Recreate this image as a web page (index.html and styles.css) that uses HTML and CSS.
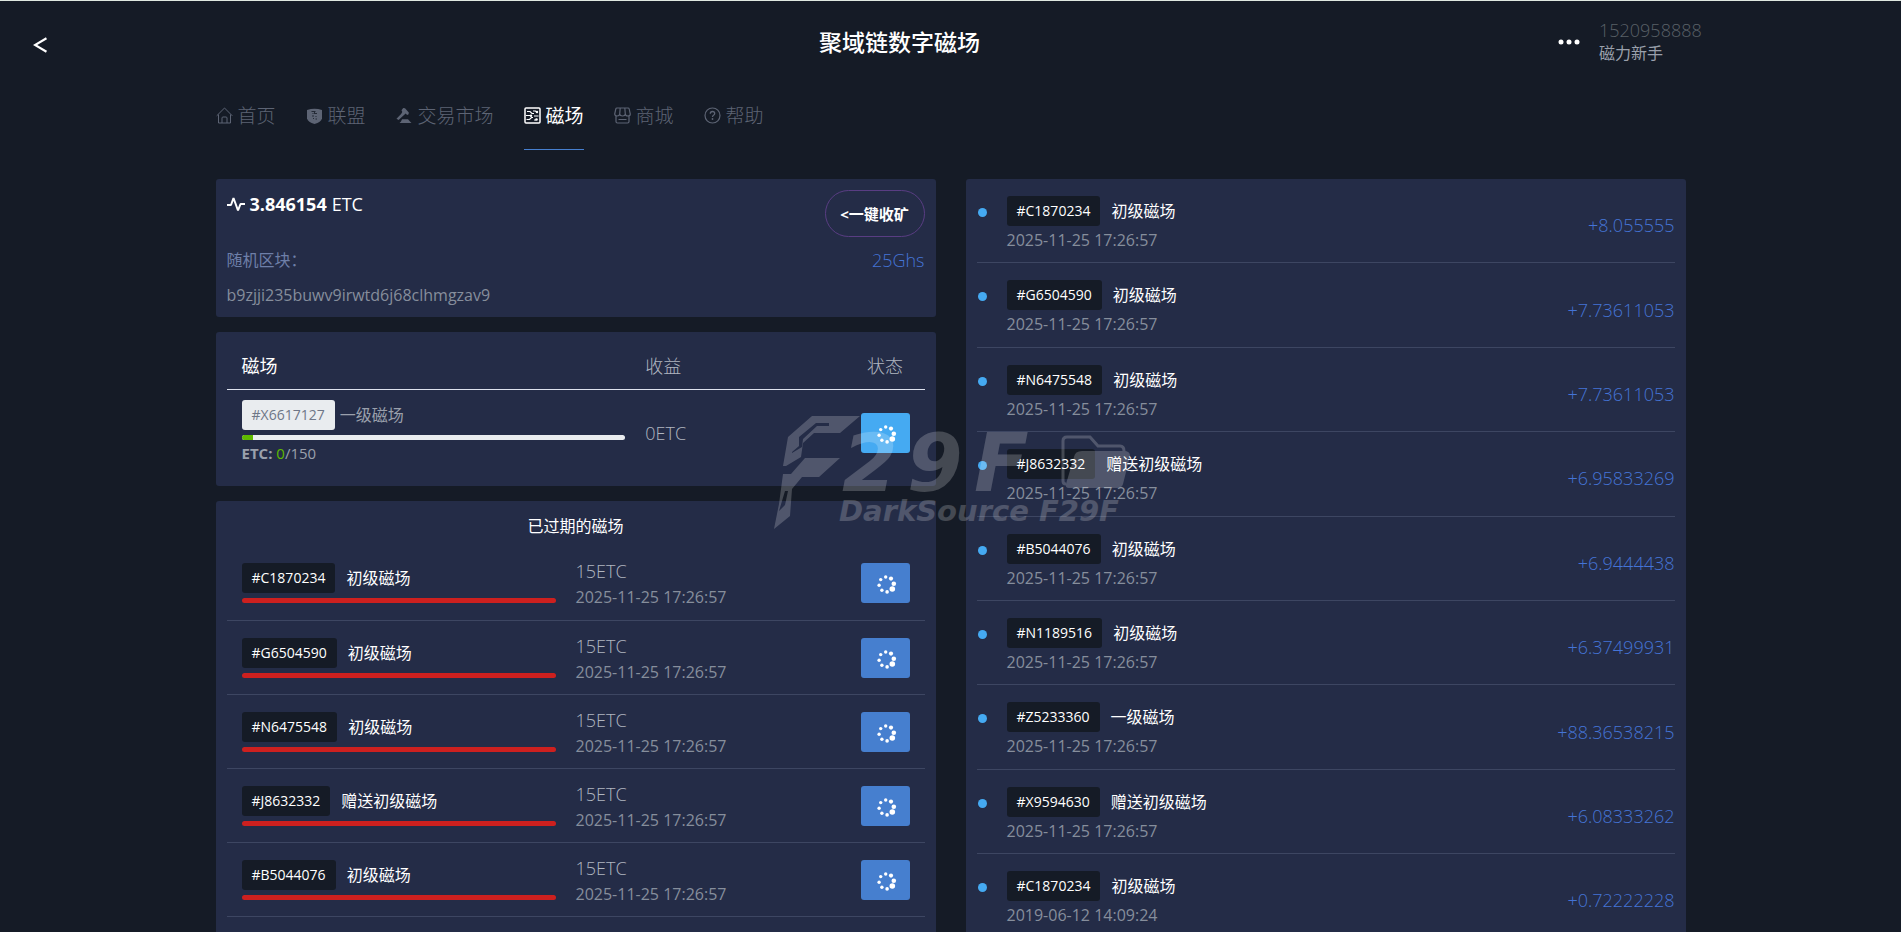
FILE: index.html
```html
<!DOCTYPE html>
<html lang="zh-CN">
<head>
<meta charset="utf-8">
<title>聚域链数字磁场</title>
<link rel="stylesheet" href="styles.css">
</head>
<body>
<svg class="defs" aria-hidden="true">
  <symbol id="spin" viewBox="0 0 49 40">
    <g fill="#fff">
      <circle cx="24.7" cy="14" r="1.7"/><circle cx="30" cy="15.6" r="2.1"/><circle cx="32.8" cy="20.7" r="2.3"/>
      <circle cx="31.3" cy="26" r="2.8"/><circle cx="26.1" cy="28.9" r="1.8"/><circle cx="20.9" cy="27.2" r="1.7"/>
      <circle cx="18.1" cy="22.2" r="1.7"/><circle cx="19.7" cy="16.6" r="1.7"/>
    </g>
  </symbol>
</svg>

<header class="top">
  <a class="back" href="#" aria-label="返回"><svg width="14" height="16" viewBox="0 0 14 16"><path d="M13.500 1.300 2 8l11.500 6.700" fill="none" stroke="#fff" stroke-width="2.200"/></svg></a>
  <h1 class="title">聚域链数字磁场</h1>
  <div class="user">
    <button class="more" type="button" aria-label="更多"><svg width="22" height="6" viewBox="0 0 22 6"><g fill="#fff"><circle cx="3" cy="3" r="2.500"/><circle cx="11" cy="3" r="2.500"/><circle cx="19" cy="3" r="2.500"/></g></svg></button>
    <div>
      <div class="phone">1520958888</div>
      <div class="rank">磁力新手</div>
    </div>
  </div>
</header>

<nav class="nav wrap">
  <a href="#"><svg viewBox="0 0 17 17"><path d="M.7 8.800 8.500 1l7.800 7.800M2.500 7.500v8.500h12V7.500M6 16v-5q0-1 1-1h3q1 0 1 1v5" fill="none" stroke="currentColor"/></svg>首页</a>
  <a href="#"><svg viewBox="0 0 17 17"><path fill="currentColor" d="M1 3Q8.500.6 16 3v8.500q-1 3.500-7.500 5.500Q2 15 1 11.500Z"/><path d="M5.500 4.500h4M6.500 6.500h1M9 6.500h2M6 9h2M10 9v1M7 11.500h1M9.500 12h1.500M8.500 4v3" stroke="#242a36" fill="none"/></svg>联盟</a>
  <a href="#"><svg viewBox="0 0 17 17"><g fill="currentColor"><path d="m7.200 1 1.800.2 3.800 4.300-.2 1.700-1.500.7-1.400-1.400-2.500 2.300L2.600 13 .5 11.800l4.600-4.700L6.300 5 5.500 3.200Z"/><path d="M6 12.300h6l2 2.200 1.500 1.500h-12l1.500-1.500Z"/></g></svg>交易市场</a>
  <a class="on" href="#" aria-current="page"><svg viewBox="0 0 17 17"><rect x="1" y="1" width="15" height="15" rx="1" fill="none" stroke="currentColor" stroke-width="1.500"/><path d="M3 4.500h3l2 2h2M9 4h2.500l1 1M2 8.500h4M10 9h4.500M2.500 12.500h3l2-2h1.500M10 13h2" fill="none" stroke="currentColor" stroke-width="1.200"/><g fill="currentColor"><circle cx="13" cy="5" r="1.200"/><circle cx="7" cy="8.700" r="1.200"/><circle cx="12.500" cy="12.500" r="1.300"/></g></svg>磁场</a>
  <a href="#"><svg viewBox="0 0 17 17"><path d="M3 1h11q1 0 1.200 1L16.300 7q0 2-2.400 2T11.300 7q-.3 2-2.800 2T5.700 7q-.3 2-2.600 2T.7 7L1.800 2Q2 1 3 1ZM6.200 1l-.5 6M10.800 1l.5 6M2 9v5.500Q2 16 3.500 16h10q1.500 0 1.500-1.500V9M4.500 12.500h8" fill="none" stroke="currentColor" stroke-width="1.200"/></svg>商城</a>
  <a href="#"><svg viewBox="0 0 17 17"><circle cx="8.500" cy="8.500" r="7.500" fill="none" stroke="currentColor" stroke-width="1.200"/><path d="M6.300 6.700q0-2.200 2.200-2.200t2.200 2q0 1.100-1.200 1.800-1 .6-1 1.700" fill="none" stroke="currentColor" stroke-width="1.300"/><circle cx="8.500" cy="12" r=".9" fill="currentColor"/></svg>帮助</a>
</nav>

<main class="cols wrap">
  <div class="left">
    <section class="card block">
      <div class="line head">
        <div class="power"><svg width="18" height="17" viewBox="0 0 18 17"><path d="M0 9h4L6.500 2 11 14.500 13.500 8H18" fill="none" stroke="#fff" stroke-width="2" stroke-linejoin="bevel"/></svg><b>3.846154</b> ETC</div>
        <button class="collect" type="button">&lt;一键收矿</button>
      </div>
      <div class="line rand"><span>随机区块：</span><span class="ghs">25Ghs</span></div>
      <div class="hash">b9zjji235buwv9irwtd6j68clhmgzav9</div>
    </section>

    <section class="card running">
      <table class="grid live">
        <thead><tr><th class="c1">磁场</th><th>收益</th><th class="c3">状态</th></tr></thead>
        <tbody><tr>
          <td class="c1"><div class="tagline near"><span class="tag pale">#X6617127</span><span>一级磁场</span></div><div class="bar"><i style="width:3%"></i></div><div class="etc"><b>ETC:</b> <em>0</em>/150</div></td>
          <td class="gain">0ETC</td>
          <td class="c3"><button class="state bright" type="button" aria-label="运行中"><svg><use href="#spin"/></svg></button></td>
        </tr></tbody>
      </table>
    </section>

    <section class="card expired">
      <h2 class="sub">已过期的磁场</h2>
      <table class="grid past">
        <tbody>
        <tr><td class="c1"><div class="tagline"><span class="tag">#C1870234</span><span>初级磁场</span></div><div class="bar red"></div></td><td><div class="gain">15ETC</div><div class="date">2025-11-25 17:26:57</div></td><td class="c3"><button class="state" type="button" aria-label="状态"><svg><use href="#spin"/></svg></button></td></tr>
        <tr><td class="c1"><div class="tagline"><span class="tag">#G6504590</span><span>初级磁场</span></div><div class="bar red"></div></td><td><div class="gain">15ETC</div><div class="date">2025-11-25 17:26:57</div></td><td class="c3"><button class="state" type="button" aria-label="状态"><svg><use href="#spin"/></svg></button></td></tr>
        <tr><td class="c1"><div class="tagline"><span class="tag">#N6475548</span><span>初级磁场</span></div><div class="bar red"></div></td><td><div class="gain">15ETC</div><div class="date">2025-11-25 17:26:57</div></td><td class="c3"><button class="state" type="button" aria-label="状态"><svg><use href="#spin"/></svg></button></td></tr>
        <tr><td class="c1"><div class="tagline"><span class="tag">#J8632332</span><span>赠送初级磁场</span></div><div class="bar red"></div></td><td><div class="gain">15ETC</div><div class="date">2025-11-25 17:26:57</div></td><td class="c3"><button class="state" type="button" aria-label="状态"><svg><use href="#spin"/></svg></button></td></tr>
        <tr><td class="c1"><div class="tagline"><span class="tag">#B5044076</span><span>初级磁场</span></div><div class="bar red"></div></td><td><div class="gain">15ETC</div><div class="date">2025-11-25 17:26:57</div></td><td class="c3"><button class="state" type="button" aria-label="状态"><svg><use href="#spin"/></svg></button></td></tr>
        </tbody>
      </table>
    </section>
  </div>

  <ul class="card feed">
    <li><i class="dot"></i><div class="info"><div class="tagline"><span class="tag">#C1870234</span><span>初级磁场</span></div><div class="date">2025-11-25 17:26:57</div></div><span class="amt">+8.055555</span></li>
    <li><i class="dot"></i><div class="info"><div class="tagline"><span class="tag">#G6504590</span><span>初级磁场</span></div><div class="date">2025-11-25 17:26:57</div></div><span class="amt">+7.73611053</span></li>
    <li><i class="dot"></i><div class="info"><div class="tagline"><span class="tag">#N6475548</span><span>初级磁场</span></div><div class="date">2025-11-25 17:26:57</div></div><span class="amt">+7.73611053</span></li>
    <li><i class="dot"></i><div class="info"><div class="tagline"><span class="tag">#J8632332</span><span>赠送初级磁场</span></div><div class="date">2025-11-25 17:26:57</div></div><span class="amt">+6.95833269</span></li>
    <li><i class="dot"></i><div class="info"><div class="tagline"><span class="tag">#B5044076</span><span>初级磁场</span></div><div class="date">2025-11-25 17:26:57</div></div><span class="amt">+6.9444438</span></li>
    <li><i class="dot"></i><div class="info"><div class="tagline"><span class="tag">#N1189516</span><span>初级磁场</span></div><div class="date">2025-11-25 17:26:57</div></div><span class="amt">+6.37499931</span></li>
    <li><i class="dot"></i><div class="info"><div class="tagline"><span class="tag">#Z5233360</span><span>一级磁场</span></div><div class="date">2025-11-25 17:26:57</div></div><span class="amt">+88.36538215</span></li>
    <li><i class="dot"></i><div class="info"><div class="tagline"><span class="tag">#X9594630</span><span>赠送初级磁场</span></div><div class="date">2025-11-25 17:26:57</div></div><span class="amt">+6.08333262</span></li>
    <li><i class="dot"></i><div class="info"><div class="tagline"><span class="tag">#C1870234</span><span>初级磁场</span></div><div class="date">2019-06-12 14:09:24</div></div><span class="amt">+0.72222228</span></li>
  </ul>
</main>

<svg class="mark" viewBox="0 0 362 120" aria-hidden="true">
  <g fill="#fff">
    <path fill-rule="evenodd" d="M38 4h48L66 21H40L29 31 27 45 12 54H9L14 25ZM42 11 25 25v9l-7 6v1l10-6 1-8 14-13h12v-3Z"/>
    <path fill-rule="evenodd" d="M31 46h35L45 65H28L18 77 16 104 0 117 5 92 9 62h8ZM11 79 5 99l6-6 3-14Z"/>
    <path d="M292 72q-3 0-3-3V29q0-4 4-4h23l8 9h22q4 0 4 5v3" fill="none" stroke="#fff" stroke-width="3"/>
    <path d="M308 39h42q6 0 6 5l-7 28q-1 4-6 4h-48q-4 0-3-4l8-27q1-6 8-6Z"/>
    <g class="brand">
      <text x="68 133 200" y="79" class="big">29F</text>
      <text x="65" y="109" class="small">DarkSource F29F</text>
    </g>
  </g>
</svg>
</body>
</html>
```
FILE: styles.css
```css
* { box-sizing: border-box; }
body {
  margin: 0;
  height: 100vh;
  overflow: hidden;
  display: flex;
  flex-direction: column;
  position: relative;
  background: #151b26;
  border-top: 1px solid #dfe8e0;
  color: #fff;
  font: 16px/24px "Open Sans", "Noto Sans", "Noto Sans CJK SC", sans-serif;
}
.defs { position: absolute; width: 0; height: 0; }
a { color: inherit; text-decoration: none; }
button { font: inherit; color: inherit; cursor: pointer; padding: 0; }
svg { display: block; flex: none; }
.wrap { width: 100%; max-width: 1470px; margin: 0 auto; }

.top {
  display: grid;
  grid-template-columns: 1fr auto 1fr;
  align-items: center;
  height: 81px;
  padding: 0 135px 0 33px;
  flex: none;
}
.back { justify-self: start; padding-top: 6px; }
.title { margin: 0; font-size: 23px; font-weight: 500; line-height: 34px; }
.user { display: flex; align-items: center; gap: 19px; justify-self: end; width: 208px; }
.more { background: none; border: 0; }
.phone { font-size: 18px; line-height: 23px; font-weight: 300; color: #596067; }
.rank { font-size: 16px; line-height: 23px; color: #9aa0ac; }

.nav { display: flex; gap: 30px; height: 97px; align-items: flex-start; flex: none; }
.nav a {
  display: flex;
  align-items: center;
  gap: 5px;
  height: 68px;
  font-size: 19px;
  font-weight: 300;
  color: #5d6474;
  border-bottom: 1px solid transparent;
}
.nav svg { width: 17px; height: 17px; }
.nav .on { color: #fff; font-weight: 400; border-color: #467fcf; }

.cols { display: grid; grid-template-columns: 1fr 1fr; gap: 30px; flex: 1; min-height: 0; }
.left { display: flex; flex-direction: column; gap: 15px; }
.card { background: #242c47; border-radius: 3px; padding: 0 11px; margin: 0; }
.expired { flex: 1; border-radius: 3px 3px 0 0; }

.line { display: flex; justify-content: space-between; }
.block { height: 138px; padding-top: 11px; }
.power { display: flex; gap: 5px; font-size: 18px; line-height: 28px; align-items: center; align-self: flex-start; }
.collect {
  width: 100px;
  height: 47px;
  border: 1px solid #593d83;
  border-radius: 24px;
  background: none;
  font-size: 15px;
  font-weight: 700;
}
.rand { line-height: 24px; margin-top: 11px; color: #6e7fa8; }
.ghs { font-size: 18px; font-weight: 300; color: #4574d6; }
.hash { margin-top: 11px; color: #868e9c; }

.grid { width: 100%; border-collapse: collapse; table-layout: fixed; }
.grid th, .grid td { padding: 0; text-align: left; vertical-align: top; }
.grid .c1 { padding: 0 20px 0 15px; }
.grid .c3 { width: 79px; padding: 0 15px; text-align: center; }
.live .c1 { width: 60%; }
.past .c1 { width: 50%; }
.running { height: 154px; }
.live th { height: 57px; vertical-align: middle; font-size: 18px; font-weight: 300; color: #b0b6c0; border-bottom: 1px solid #dee2ee; }
.live th, .live th.c1, .live th.c3 { padding-top: 12px; }
.live th.c1 { color: #fff; font-weight: 400; }
.live td { color: #9aa0ac; }
.live td, .live td.c1, .live td.c3 { padding-top: 10px; }
.live td.gain, .live td.c3 { padding-top: 23px; }
.live td.gain { line-height: 40px; }
.gain, .live td.gain { font-size: 18px; font-weight: 300; color: #b0b6c0; }
.gain { line-height: 22px; }
.date { font-size: 16px; line-height: 1.4; color: #868e9c; }
.past .date { margin-top: 4px; }
.past tr { border-bottom: 1px solid #3d4662; height: 74px; }
.past td, .past td.c1, .past td.c3 { padding-top: 17px; }
.past td:nth-child(2) { padding-top: 14px; }

.tagline { display: flex; align-items: center; gap: 11px; line-height: 30px; }
.near { gap: 5px; }
.tag { padding: 0 10px; border-radius: 3px; background: #151b26; font-size: 14px; line-height: 30px; }
.pale { background: #e9ecef; color: #6e7687; }
.bar { height: 5px; margin-top: 5px; border-radius: 3px; background: #e9ecef; overflow: hidden; }
.bar i { display: block; height: 100%; background: #5eba00; }
.red { background: #cd201f; }
.etc { margin-top: 1px; font-size: 15px; }
.etc em { font-style: normal; color: #5eba00; }
.state { display: block; width: 49px; height: 40px; border: 0; border-radius: 3px; background: #467fcf; }
.state svg { width: 49px; height: 40px; }
.bright { background: #45aaf2; }
.sub { margin: 0; padding-top: 11px; height: 45px; font-size: 16px; line-height: 28px; font-weight: 400; text-align: center; }

.feed { list-style: none; }
.feed li { display: flex; align-items: center; padding: 17px 0 11px; border-bottom: 1px solid #3d4662; }
.dot { width: 9px; height: 9px; border-radius: 50%; background: #45aaf2; margin: 12px 20px 0 1px; align-self: flex-start; }
.info { flex: 1; }
.feed .date { margin-top: 3px; }
.amt { padding-top: 3px; font-size: 18px; font-weight: 300; color: #4574d6; }

.mark { position: absolute; left: calc(50% - 177px); top: 411px; width: 362px; height: 120px; opacity: .2; pointer-events: none; }
.brand { font-family: "DejaVu Sans", sans-serif; font-weight: 700; font-style: italic; }
.big { font-size: 80px; }
.small { font-size: 29px; }
```
